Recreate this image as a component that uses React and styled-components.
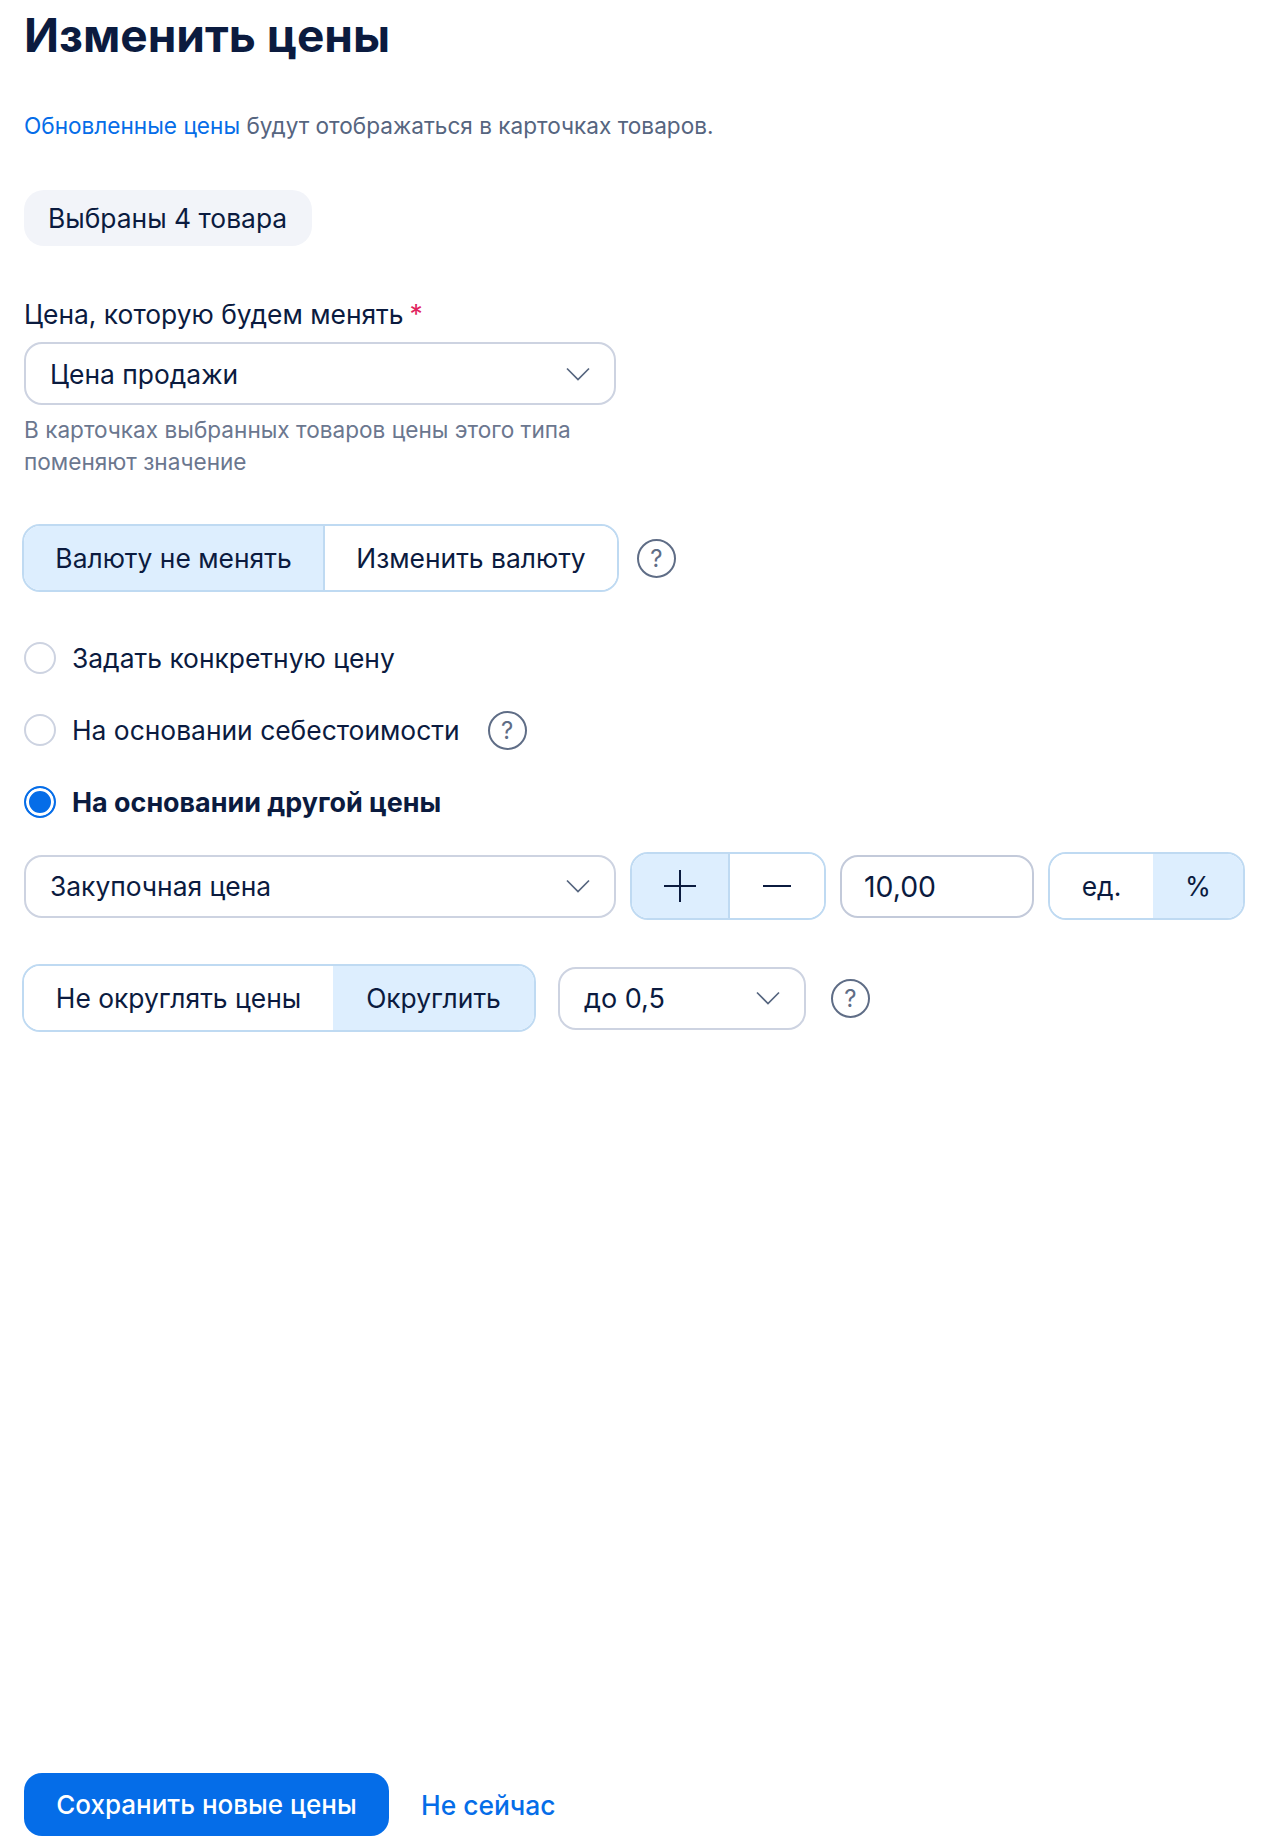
import React from "react";
import styled, { createGlobalStyle } from "styled-components";

const GlobalStyle = createGlobalStyle`
  html, body {
    margin: 0;
    padding: 0;
    background: #fff;
  }
  * {
    box-sizing: border-box;
  }
`;

const Page = styled.div`
  display: flex;
  flex-direction: column;
  width: 1266px;
  height: 1848px;
  padding: 0 21px 12px 24px;
  font-family: Inter, "Noto Sans", sans-serif;
  font-size: 26.4px;
  color: #0b1b3f;
`;

const Title = styled.h1`
  margin: 7px 0 1px;
  font-size: 46px;
  line-height: 56px;
  font-weight: 700;
  letter-spacing: 0;
`;

const Lead = styled.p`
  margin: 48px 0 0;
  font-size: 22.6px;
  line-height: 28px;
  color: #56657f;
  a {
    color: #056de8;
  }
`;

const Pill = styled.div`
  align-self: flex-start;
  margin-top: 50px;
  height: 56px;
  width: 288px;
  padding: 0 24px;
  display: flex;
  align-items: center;
  border-radius: 20px;
  background: #f2f4f9;
`;

const Label = styled.div`
  margin: 51px 0 11px;
  height: 34px;
  line-height: 34px;
  span {
    color: #e0245e;
    margin-left: 6px;
  }
`;

const Hint = styled.p`
  margin: 9px 0 0;
  width: 591px;
  font-size: 22.6px;
  line-height: 32px;
  color: #6b778f;
`;

const SelectBox = styled.div`
  display: flex;
  align-items: center;
  justify-content: space-between;
  flex: none;
  width: ${(p) => p.$width}px;
  height: 63px;
  padding: 0 24px 0 24px;
  border: 2px solid #cdd3e1;
  border-radius: 18px;
  background: #fff;
  font-size: ${(p) => p.$size || 26.4}px;
`;

const Chevron = () => (
  <svg width="24" height="14" viewBox="0 0 24 14" fill="none">
    <path d="M1 1.5 12 12.5 23 1.5" stroke="#56657f" strokeWidth="1.7" />
  </svg>
);

const Row = styled.div`
  display: flex;
  align-items: center;
  gap: ${(p) => p.$gap || 0}px;
  margin-top: ${(p) => p.$top || 0}px;
`;

const Segments = styled.div`
  display: flex;
  flex: none;
  height: ${(p) => p.$height || 68}px;
  margin-left: ${(p) => p.$shift || 0}px;
  border: 2px solid #bfdaf2;
  border-radius: 18px;
  overflow: hidden;
`;

const Segment = styled.div`
  display: flex;
  align-items: center;
  justify-content: center;
  width: ${(p) => p.$width}px;
  background: ${(p) => (p.$active ? "#ddeefe" : "#fff")};
  border-left: ${(p) => (p.$divider ? "2px solid #bfdaf2" : "none")};
`;

const HelpIcon = styled.span`
  display: flex;
  align-items: center;
  justify-content: center;
  flex: none;
  width: 39px;
  height: 39px;
  margin-left: ${(p) => p.$left || 0}px;
  border: 2px solid #5f6d86;
  border-radius: 50%;
  font-size: 24px;
  font-weight: 400;
  color: #5f6d86;
`;

const RadioList = styled.div`
  display: flex;
  flex-direction: column;
  gap: 38px;
  margin-top: 49px;
`;

const RadioRow = styled.div`
  display: flex;
  align-items: center;
  height: 34px;
  font-weight: ${(p) => (p.$checked ? 700 : 400)};
  font-size: ${(p) => (p.$checked ? 26.9 : 26.4)}px;
`;

const Radio = styled.span`
  flex: none;
  width: 32px;
  height: 32px;
  margin-right: 16px;
  border-radius: 50%;
  border: 2px solid ${(p) => (p.$checked ? "#056de8" : "#cdd3e1")};
  background: ${(p) => (p.$checked ? "#056de8" : "#fff")};
  box-shadow: ${(p) => (p.$checked ? "inset 0 0 0 3px #fff" : "none")};
`;

const ValueInput = styled.div`
  display: flex;
  align-items: center;
  flex: none;
  width: 194px;
  height: 63px;
  padding: 0 22px;
  border: 2px solid #c3cada;
  border-radius: 18px;
  font-size: 28.4px;
`;

const Footer = styled.div`
  display: flex;
  align-items: center;
  gap: 32px;
  margin-top: auto;
`;

const PrimaryButton = styled.button`
  width: 365px;
  height: 63px;
  border: 0;
  border-radius: 18px;
  background: #056de8;
  color: #fff;
  font: 500 26px Inter, "Noto Sans", sans-serif;
`;

const TextLink = styled.a`
  color: #056de8;
  font-weight: 500;
`;

const SignIcon = ({ minus }) => (
  <svg width="34" height="34" viewBox="0 0 34 34" fill="none">
    <path d={minus ? "M3 17H31" : "M1 17H33M17 1V33"} stroke="#0b1b3f" strokeWidth="2" />
  </svg>
);

export default function App() {
  return (
    <Page>
      <GlobalStyle />
      <Title>Изменить цены</Title>
      <Lead>
        <a>Обновленные цены</a> будут отображаться в карточках товаров.
      </Lead>
      <Pill>Выбраны 4 товара</Pill>

      <Label>
        Цена, которую будем менять<span>*</span>
      </Label>
      <SelectBox $width={592}>
        Цена продажи
        <Chevron />
      </SelectBox>
      <Hint>В карточках выбранных товаров цены этого типа поменяют значение</Hint>

      <Row $top={46} $gap={18}>
        <Segments $shift={-2}>
          <Segment $width={299} $active>
            Валюту не менять
          </Segment>
          <Segment $width={294} $divider>
            Изменить валюту
          </Segment>
        </Segments>
        <HelpIcon>?</HelpIcon>
      </Row>

      <RadioList>
        <RadioRow>
          <Radio />
          Задать конкретную цену
        </RadioRow>
        <RadioRow>
          <Radio />
          На основании себестоимости
          <HelpIcon $left={28}>?</HelpIcon>
        </RadioRow>
        <RadioRow $checked>
          <Radio $checked />
          На основании другой цены
        </RadioRow>
      </RadioList>

      <Row $top={33} $gap={14}>
        <SelectBox $width={592}>
          Закупочная цена
          <Chevron />
        </SelectBox>
        <Segments>
          <Segment $width={96} $active>
            <SignIcon />
          </Segment>
          <Segment $width={96} $divider>
            <SignIcon minus />
          </Segment>
        </Segments>
        <ValueInput>10,00</ValueInput>
        <Segments>
          <Segment $width={103}>ед.</Segment>
          <Segment $width={90} $active>
            %
          </Segment>
        </Segments>
      </Row>

      <Row $top={44} $gap={22}>
        <Segments $shift={-2} $height={68}>
          <Segment $width={309}>Не округлять цены</Segment>
          <Segment $width={201} $active>
            Округлить
          </Segment>
        </Segments>
        <SelectBox $width={248} $size={27}>
          до 0,5
          <Chevron />
        </SelectBox>
        <HelpIcon $left={3}>?</HelpIcon>
      </Row>

      <Footer>
        <PrimaryButton>Сохранить новые цены</PrimaryButton>
        <TextLink>Не сейчас</TextLink>
      </Footer>
    </Page>
  );
}
